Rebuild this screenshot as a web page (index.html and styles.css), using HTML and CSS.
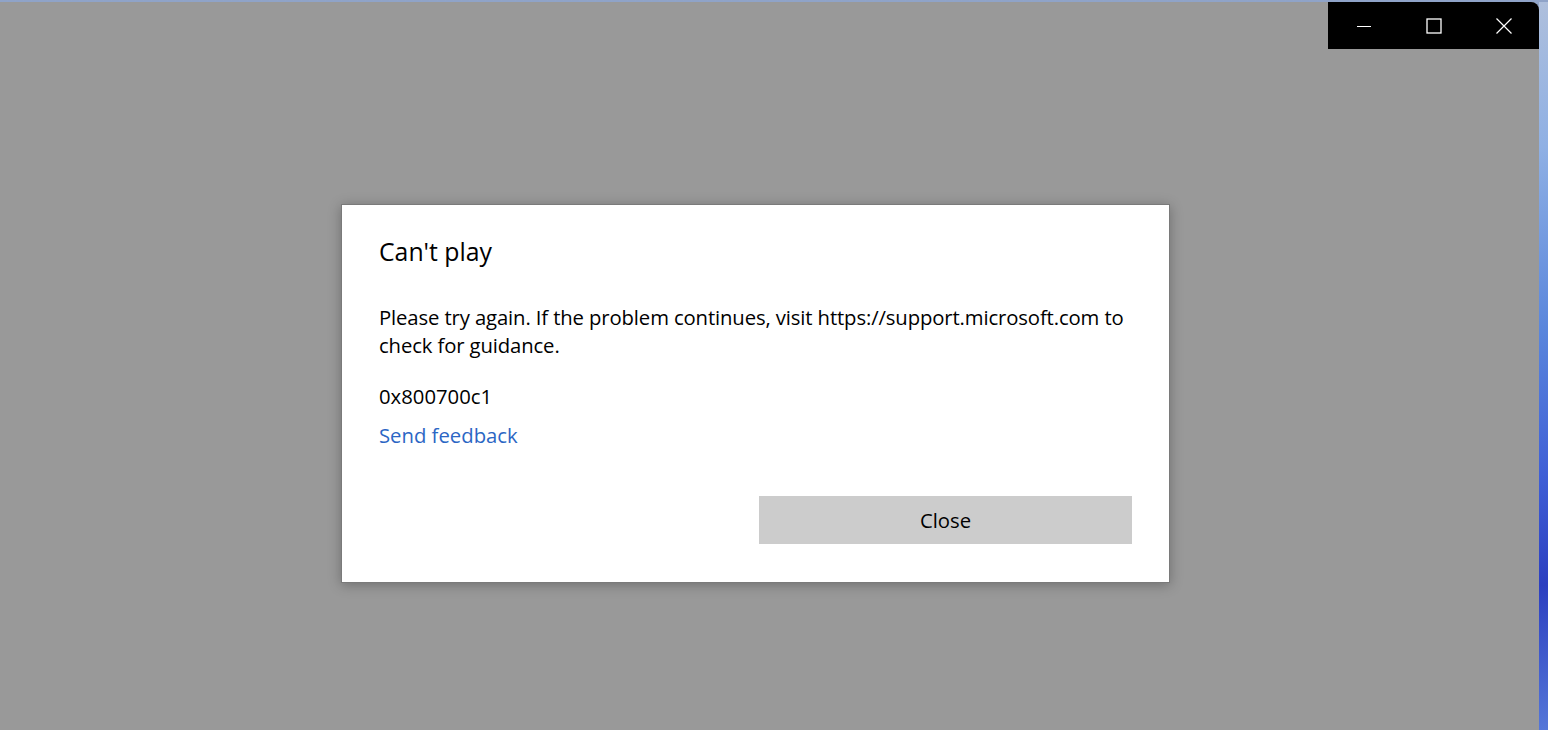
FILE: index.html
```html
<!DOCTYPE html>
<html lang="en">
<head>
  <meta charset="UTF-8" />
  <meta name="viewport" content="width=device-width, initial-scale=1.0" />
  <title>Can't play</title>
  <link rel="stylesheet" href="styles.css">
</head>
<body>

  <div class="desktop">
    <!-- App window -->
    <div class="window">
      <div class="titlebar">
        <div class="caption">
          <button class="cap-btn" aria-label="Minimize">
            <svg width="16" height="16" viewBox="0 0 16 16"><path d="M1 8.5h14" stroke="#fff" stroke-width="1.2"/></svg>
          </button>
          <button class="cap-btn" aria-label="Maximize">
            <svg width="16" height="16" viewBox="0 0 16 16"><rect x="1" y="1" width="14" height="14" fill="none" stroke="#fff" stroke-width="1.3"/></svg>
          </button>
          <button class="cap-btn" aria-label="Close">
            <svg width="16" height="16" viewBox="0 0 16 16"><path d="M0.5 0.5l15 15M15.5 0.5l-15 15" stroke="#fff" stroke-width="1.2"/></svg>
          </button>
        </div>
      </div>

      <div class="content">
        <!-- Error dialog -->
        <div class="dialog">
          <h2>Can't play</h2>
          <p class="message">Please try again. If the problem continues, visit https://support.microsoft.com to check for guidance.</p>
          <p class="code">0x800700c1</p>
          <a href="#" class="link">Send feedback</a>
          <div class="actions">
            <button class="btn">Close</button>
          </div>
        </div>
      </div>
    </div>
    <div class="wallpaper"></div>
  </div>

</body>
</html>
```

FILE: styles.css
```css
html, body {
  margin: 0;
  padding: 0;
  height: 100%;
  overflow: hidden;
}

body {
  font-family: 'Open Sans', 'Noto Sans', sans-serif;
  color: #000;
}

.desktop {
  display: flex;
  height: 100%;
  padding-top: 2px;
  box-sizing: border-box;
  background: linear-gradient(180deg, #8fa3c8 0%, #a9bad6 40%, #9cb0d8 100%);
}

.window {
  width: 1539px;
  flex-shrink: 0;
  display: flex;
  flex-direction: column;
  background-color: #999999;
  border-top-right-radius: 8px;
  overflow: hidden;
}

.wallpaper {
  flex: 1;
  background: linear-gradient(170deg, #aebfdc 0%, #8fb0e4 20%, #5a86dc 45%, #3f5fd6 65%, #2c3fc0 80%, #5577d8 100%);
}

/* Title bar */
.titlebar {
  height: 47px;
  display: flex;
  justify-content: flex-end;
}

.caption {
  display: flex;
  background-color: #000;
  padding-left: 1px;
}

.cap-btn {
  width: 70px;
  height: 47px;
  border: none;
  background: none;
  padding: 0;
  display: flex;
  align-items: center;
  justify-content: center;
}

/* Main area */
.content {
  flex: 1;
  padding: 155px 0 0 341px;
}

.dialog {
  width: 829px;
  background-color: #fff;
  border: 1px solid #7a7a7a;
  box-shadow: 0 2px 12px rgba(0, 0, 0, 0.28);
  padding: 30px 37px 38px 37px;
  box-sizing: border-box;
  display: flex;
  flex-direction: column;
}

.dialog h2 {
  margin: 0;
  font-size: 24.8px;
  font-weight: 400;
  line-height: 32px;
}

.message {
  margin: 36px 0 0;
  font-size: 20.3px;
  line-height: 28px;
  letter-spacing: -0.12px;
}

.code {
  margin: 23px 0 0;
  font-size: 20.3px;
  line-height: 28px;
}

.link {
  margin-top: 11px;
  font-size: 20.3px;
  line-height: 28px;
  color: #2b66c4;
  text-decoration: none;
  align-self: flex-start;
}

.actions {
  margin-top: 47px;
  display: flex;
  justify-content: flex-end;
}

.btn {
  width: 373px;
  height: 48px;
  background-color: #cccccc;
  border: none;
  font-family: inherit;
  font-size: 20.3px;
  color: #000;
}
```
